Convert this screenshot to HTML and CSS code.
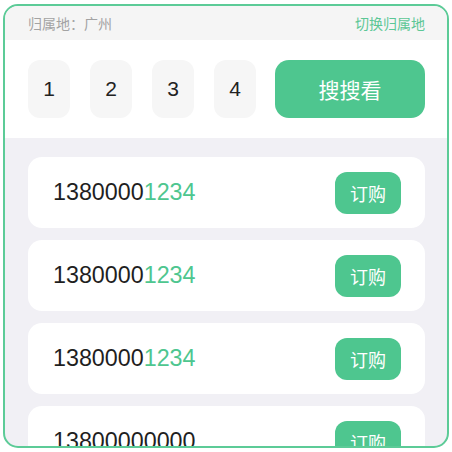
FILE: index.html
```html
<!DOCTYPE html>
<html lang="zh">
<head>
<meta charset="utf-8">
<link rel="stylesheet" href="styles.css">
</head>
<body>
<div class="panel">
  <div class="header">
    <span class="loc">归属地：广州</span>
    <span class="switch">切换归属地</span>
  </div>
  <div class="search">
    <div class="digit">1</div>
    <div class="digit">2</div>
    <div class="digit">3</div>
    <div class="digit">4</div>
    <div class="go">搜搜看</div>
  </div>
  <div class="list">
    <div class="card">
      <span class="num">1380000<em>1234</em></span>
      <span class="buy">订购</span>
    </div>
    <div class="card">
      <span class="num">1380000<em>1234</em></span>
      <span class="buy">订购</span>
    </div>
    <div class="card">
      <span class="num">1380000<em>1234</em></span>
      <span class="buy">订购</span>
    </div>
    <div class="card">
      <span class="num">13800000000</span>
      <span class="buy">订购</span>
    </div>
  </div>
</div>
</body>
</html>
```
FILE: styles.css
```css
html, body {
  margin: 0;
  padding: 0;
  background: #ffffff;
}
body {
  font-family: "Liberation Sans", "Noto Sans CJK SC", sans-serif;
  padding: 4px 3px 4px 3px;
}
.panel {
  width: 446px;
  height: 444px;
  box-sizing: border-box;
  border: 2px solid #5ccb97;
  border-radius: 15px;
  overflow: hidden;
  background: #f1f0f5;
  display: flex;
  flex-direction: column;
}
.header {
  height: 34px;
  flex: none;
  background: #f5f5f5;
  display: flex;
  align-items: center;
  justify-content: space-between;
  padding: 0 22px 0 23px;
  font-family: "Noto Sans CJK SC", sans-serif;
  font-size: 14px;
}
.loc { color: #a3a3a3; }
.switch { color: #5cc796; }
.search {
  flex: none;
  background: #ffffff;
  display: flex;
  gap: 20px;
  padding: 20px 22px 20px 23px;
}
.digit {
  width: 42px;
  height: 58px;
  border-radius: 12px;
  background: #f6f6f6;
  display: flex;
  align-items: center;
  justify-content: center;
  font-size: 21px;
  color: #222222;
}
.go {
  flex: 1;
  margin-left: -1px;
  height: 58px;
  border-radius: 14px;
  background: #4ec68f;
  color: #ffffff;
  display: flex;
  align-items: center;
  justify-content: center;
  font-family: "Noto Sans CJK SC", sans-serif;
  font-size: 21px;
}
.list {
  display: flex;
  flex-direction: column;
  gap: 12px;
  padding: 19px 22px 0 23px;
}
.card {
  flex: none;
  height: 71px;
  background: #ffffff;
  border-radius: 14px;
  display: flex;
  align-items: center;
  justify-content: space-between;
  padding: 0 24px 0 25px;
}
.num {
  font-size: 23.3px;
  color: #1f1f1f;
}
.num em {
  font-style: normal;
  color: #4ec68f;
}
.buy {
  width: 66px;
  height: 42px;
  border-radius: 12px;
  background: #4ec68f;
  color: #ffffff;
  display: flex;
  align-items: center;
  justify-content: center;
  font-family: "Noto Sans CJK SC", sans-serif;
  font-size: 18px;
}
```
